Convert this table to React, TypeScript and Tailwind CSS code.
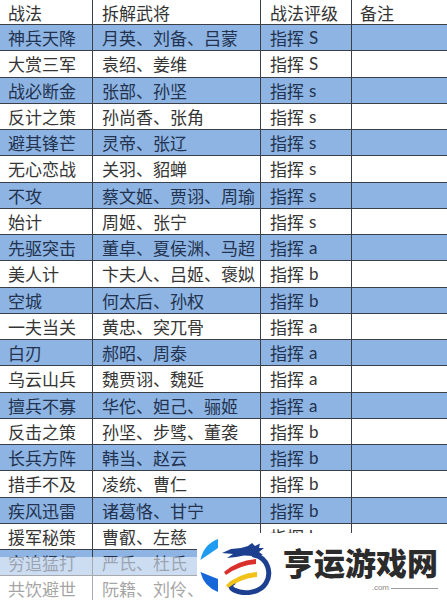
import React from "react";

type Row = [string, string, string];

const rows: Row[] = [
  ["神兵天降", "月英、刘备、吕蒙", "S"],
  ["大赏三军", "袁绍、姜维", "S"],
  ["战必断金", "张部、孙坚", "s"],
  ["反计之策", "孙尚香、张角", "s"],
  ["避其锋芒", "灵帝、张辽", "s"],
  ["无心恋战", "关羽、貂蝉", "s"],
  ["不攻", "蔡文姬、贾诩、周瑜", "s"],
  ["始计", "周姬、张宁", "s"],
  ["先驱突击", "董卓、夏侯渊、马超", "a"],
  ["美人计", "卞夫人、吕姬、褒姒", "b"],
  ["空城", "何太后、孙权", "b"],
  ["一夫当关", "黄忠、突兀骨", "a"],
  ["白刃", "郝昭、周泰", "a"],
  ["乌云山兵", "魏贾诩、魏延", "a"],
  ["擅兵不寡", "华佗、妲己、骊姬", "a"],
  ["反击之策", "孙坚、步骘、董袭", "b"],
  ["长兵方阵", "韩当、赵云", "b"],
  ["措手不及", "凌统、曹仁", "b"],
  ["疾风迅雷", "诸葛恪、甘宁", "b"],
  ["援军秘策", "曹叡、左慈", "b"],
  ["穷追猛打", "严氏、杜氏", "b"],
  ["共饮避世", "阮籍、刘伶、", ""],
];

const cjk = { fontFamily: '"Noto Sans CJK SC", "Noto Sans", sans-serif' };

function Logo() {
  return (
    <div className="absolute left-[197px] top-[533px] w-[250px] h-[67px] bg-white flex items-start">
      <svg className="ml-[3px] mt-[6px]" width="18" height="53" viewBox="0 0 18 53">
        <path d="M18,0 A28.5,28.5 0 0 0 0.4,21 L18,9 Z" fill="#1f9cf2" />
        <path d="M0.4,33 L18,40 L18,53 A28.5,28.5 0 0 1 0.4,33 Z" fill="#1766d9" />
      </svg>
      <svg className="ml-[4px] mt-[10px]" width="50" height="52" viewBox="0 0 50 52">
        <path
          d="M0,10 L9,6 L19,5 L26,3 L30,0 L33,3 L38,0.5 L37,5 L42,5 L37,9 L41,12 L31,13 L22,12.5 L14,14 L5,15 L11,11 Z"
          fill="#1d3f8f"
        />
        <path
          d="M32,12 C46,15 50,30 44,40 C38,50 22,52 12,47 C8,45 8,41 11,40"
          fill="none"
          stroke="#1d3f8f"
          strokeWidth="5"
          strokeLinecap="round"
        />
        <path d="M2,29 Q14,18 34,16 L34,21 Q18,22 4,32 Z" fill="#d9302c" />
        <path d="M4,42 Q16,31 35,29 L35,34 Q20,35 6,45 Z" fill="#f2c21b" />
      </svg>
      <div className="ml-[11px] mt-[13px] flex flex-col">
        <div
          className="text-[31px] leading-[32px] font-black text-[#2b2b2b] tracking-[0px]"
          style={cjk}
        >
          亨运游戏网
        </div>
        <div className="flex items-center justify-end gap-[2px] mt-[6px]">
          <span
            className="text-[8px] leading-[8px] text-[#8a8a8a]"
            style={{ fontFamily: '"Liberation Sans", sans-serif' }}
          >
            .com
          </span>
          <span className="w-[47px] h-px bg-[#9a9a9a]" />
        </div>
      </div>
    </div>
  );
}

export default function App() {
  return (
    <div className="relative w-[447px] h-[600px] overflow-hidden bg-white" style={cjk}>
      <div className="grid grid-cols-[93px_168px_91px_1fr]">
        {/* header */}
        {["战法", "拆解武将", "战法评级", "备注"].map((h, i) => (
          <div
            key={h}
            className={
              "h-[25px] flex items-center border-b border-[#3a3f48] text-[17px] leading-none text-[#333] " +
              (i === 0 ? "pl-2 border-r " : i === 3 ? "pl-[8px] " : "pl-[9px] border-r ")
            }
          >
            {h}
          </div>
        ))}
        {rows.map((r, idx) => {
          const blue = idx % 2 === 0;
          const bg = blue ? "bg-[#8db4e2] text-[#22324f] " : "bg-white text-[#353535] ";
          const base =
            "h-[26.25px] flex items-center border-b border-[#3a3f48] text-[17px] leading-none whitespace-nowrap overflow-hidden " +
            bg;
          return (
            <React.Fragment key={idx}>
              <div className={base + "pl-2 border-r"}>{r[0]}</div>
              <div className={base + "pl-[9px] border-r"}>{r[1]}</div>
              <div className={base + "pl-[9px] border-r"}>
                {r[2] !== "" && (
                  <>
                    指挥
                    <span
                      className="ml-[5px] text-[17px]"
                      style={{ fontFamily: 'Lato, "Open Sans", sans-serif' }}
                    >
                      {r[2]}
                    </span>
                  </>
                )}
              </div>
              <div className={base + "pl-[8px]"} />
            </React.Fragment>
          );
        })}
      </div>
      {/* fade overlay at the bottom */}
      <div className="absolute left-0 right-0 top-[557px] bottom-0 bg-white/55" />
      <Logo />
    </div>
  );
}
